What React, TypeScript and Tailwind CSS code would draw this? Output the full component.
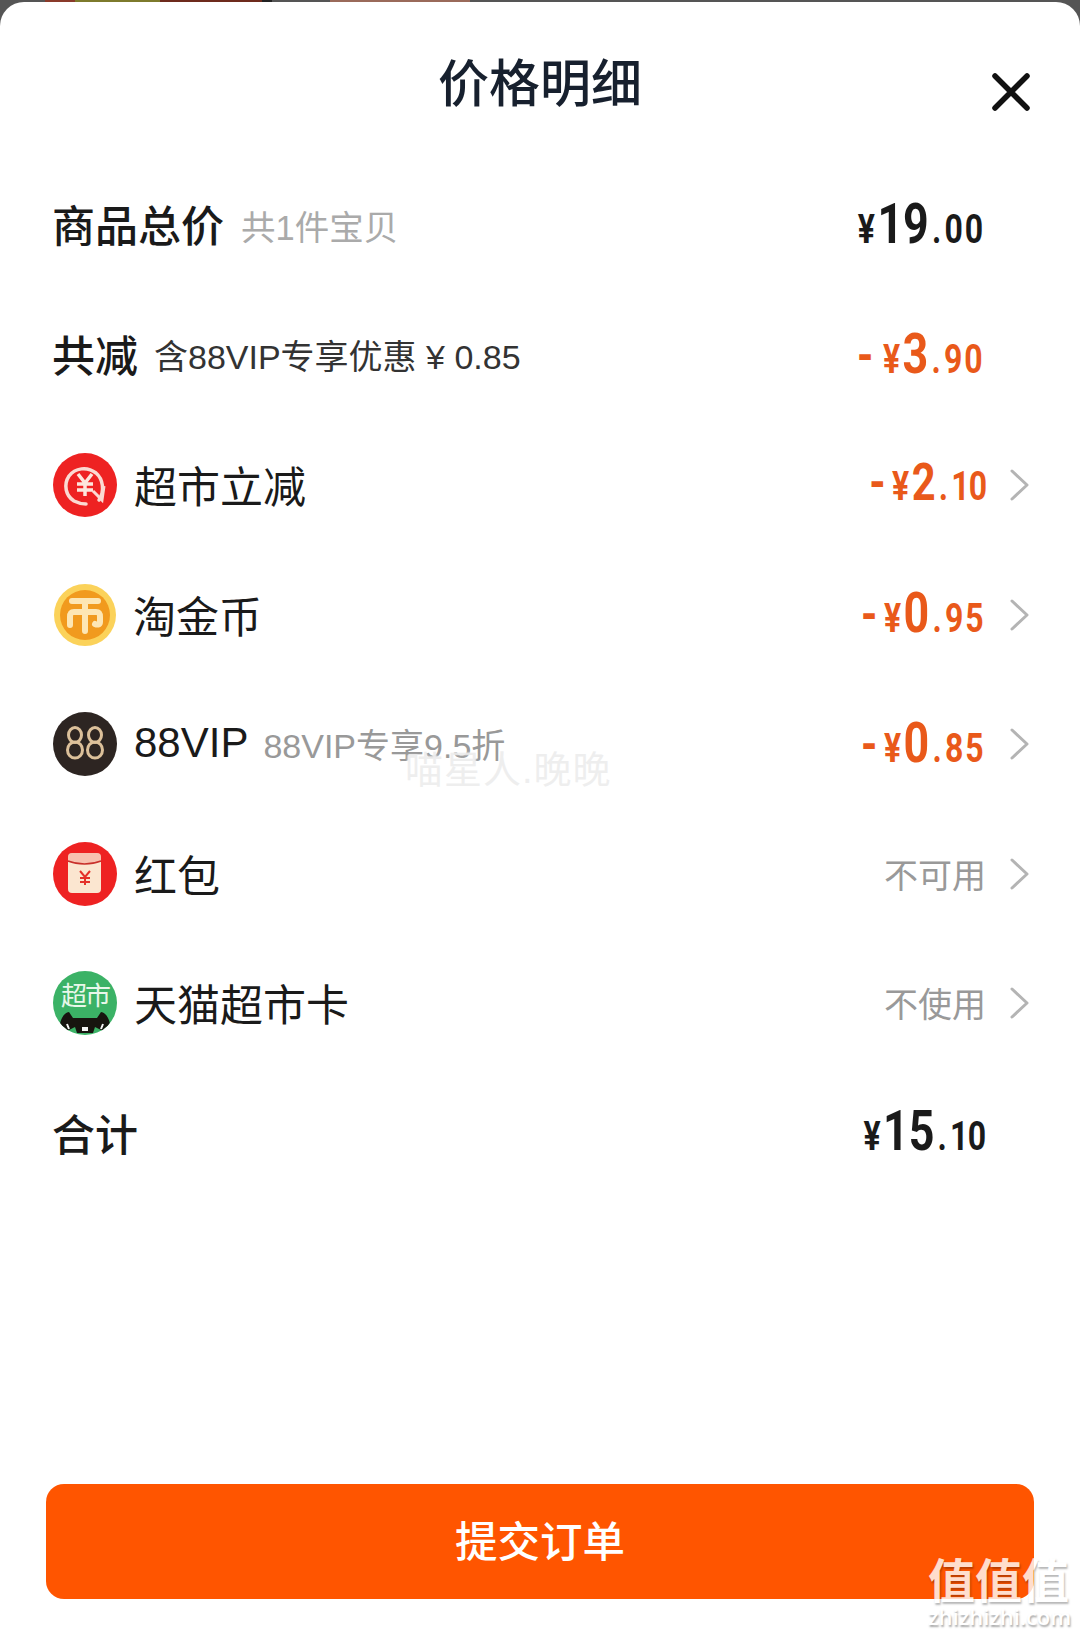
// 价格明细 bottom sheet
const SANS = "font-['Liberation_Sans','Noto_Sans_CJK_SC',sans-serif]";

function Amount({
  sign,
  big,
  small,
  orange,
  bigSize = "text-[56px]",
  gap = "mr-[8px]",
  smallTracking = "tracking-[2.5px]",
}: {
  sign: string;
  big: string;
  small: string;
  orange?: boolean;
  bigSize?: string;
  gap?: string;
  smallTracking?: string;
}) {
  return (
    <span
      className={`flex items-baseline pb-[3px] origin-right scale-x-[0.8] font-['Roboto',sans-serif] font-bold leading-none ${
        orange ? "text-[#e9591a]" : "text-[#1a1a1a]"
      }`}
    >
      {sign === "-¥" ? <span className={`text-[52px] ${gap}`}>-</span> : null}
      <span className="text-[40px] mr-[3px]">¥</span>
      <span className={bigSize}>{big}</span>
      <span className="text-[40px] mx-[4px]">.</span>
      <span className={`text-[40px] ${smallTracking}`}>{small}</span>
    </span>
  );
}

function Chevron() {
  return (
    <svg width="20" height="32" viewBox="0 0 20 32" fill="none" className="shrink-0">
      <path d="M2 2 L17 16 L2 30" stroke="#b4b4b4" strokeWidth="3" strokeLinecap="round" strokeLinejoin="round" />
    </svg>
  );
}

function SupermarketIcon() {
  return (
    <svg width="64" height="64" viewBox="0 0 64 64" className="shrink-0">
      <circle cx="32" cy="32" r="32" fill="#ee2222" />
      <path d="M46 47 C52 38 50 26 43 20 C34 13 22 15 16 23 C10 32 13 43 21 48 C25 50 29 51 33 51" fill="none" stroke="#fbdad2" strokeWidth="3.5" strokeLinecap="round" />
      <path d="M40 38 L49 47 L51 33" fill="none" stroke="#fbdad2" strokeWidth="3" />
      <path d="M25 21 L32 30 L39 21 M32 30 V43 M24 31 H40 M24 37 H40" fill="none" stroke="#fde6dc" strokeWidth="3.5" />
    </svg>
  );
}

function CoinIcon() {
  return (
    <svg width="62" height="62" viewBox="0 0 62 62" className="shrink-0 ml-[1px]">
      <circle cx="31" cy="31" r="31" fill="#fbd25a" />
      <circle cx="31" cy="31" r="25" fill="#f19a1e" />
      <path d="M18 17 H44 M31 17 V47 M20 28 H42 C46 28 46 30 46 33 V38 C46 41 43 41 41 40 M20 28 C17 28 16 30 16 33 V41" fill="none" stroke="#fde6b4" strokeWidth="6" strokeLinecap="round" />
    </svg>
  );
}

function VipIcon() {
  return (
    <svg width="64" height="64" viewBox="0 0 64 64" className="shrink-0">
      <circle cx="32" cy="32" r="32" fill="#2d2522" />
      <g fill="none" stroke="#dcc09a" strokeWidth="3">
        <ellipse cx="22" cy="23" rx="6.5" ry="7.5" />
        <ellipse cx="22" cy="38" rx="7.5" ry="8" />
        <ellipse cx="42" cy="23" rx="6.5" ry="7.5" />
        <ellipse cx="42" cy="38" rx="7.5" ry="8" />
      </g>
    </svg>
  );
}

function RedPacketIcon() {
  return (
    <svg width="64" height="64" viewBox="0 0 64 64" className="shrink-0">
      <circle cx="32" cy="32" r="32" fill="#ee2222" />
      <rect x="15" y="11" width="33" height="40" rx="4" fill="#fbe6d0" />
      <path d="M15 15 C15 12 17 11 19 11 H44 C46 11 48 12 48 15 V19 C38 23 25 23 15 19 Z" fill="#ee2222" opacity="0.18" />
      <path d="M15 19 C25 23 38 23 48 19" fill="none" stroke="#c8302a" strokeWidth="1.5" />
      <path d="M27 29 L32 35 L37 29 M32 35 V43 M27 36 H37 M27 40 H37" fill="none" stroke="#e4312a" strokeWidth="2" />
    </svg>
  );
}

function TmallIcon() {
  return (
    <div className="relative w-16 h-16 shrink-0 rounded-full overflow-hidden bg-[#3bb266]">
      <span className="absolute left-0 right-0 top-[8px] text-center text-[#e8f7ea] text-[26px] leading-[30px] tracking-[-2px] font-['Noto_Sans_CJK_SC',sans-serif]">
        超市
      </span>
      <svg width="64" height="64" viewBox="0 0 64 64" className="absolute inset-0">
        <path d="M7 53 C8 47 12 41 16 41 L20 47 H44 L48 41 C52 41 56 47 57 53 L50 60 L42 56 L40 62 H24 L22 56 L14 60 Z" fill="#17140f" />
        <rect x="29" y="56" width="6" height="4" fill="#f4f4f4" />
        <path d="M14 53 L16 58 M50 53 L48 58" stroke="#f4f4f4" strokeWidth="2" />
      </svg>
    </div>
  );
}

function DetailRow({
  icon,
  label,
  note,
  value,
}: {
  icon: React.ReactNode;
  label: string;
  note?: string;
  value: React.ReactNode;
}) {
  return (
    <div className="h-[129.6px] flex items-center">
      {icon}
      {note ? (
        <>
          <span className="ml-[17px] pb-[2px] text-[42px] leading-none text-[#1a1a1a]">{label}</span>
          <span className="ml-[15px] pt-[4px] text-[34px] leading-none text-[#999999]">{note}</span>
        </>
      ) : (
        <span className="ml-[17px] pt-[7px] text-[43px] leading-none text-[#1a1a1a]">{label}</span>
      )}
      <span className="ml-auto flex items-center">
        {value}
        <span className="ml-[24px]">
          <Chevron />
        </span>
      </span>
    </div>
  );
}

function PlainRow({ left, right }: { left: React.ReactNode; right: React.ReactNode }) {
  return (
    <div className="h-[129.6px] flex items-center justify-between pr-[45px]">
      <div className="flex items-center -ml-[1px] pt-[4px]">{left}</div>
      {right}
    </div>
  );
}

function Unavailable({ text }: { text: string }) {
  return <span className="pt-[4px] text-[34px] leading-none text-[#999999]">{text}</span>;
}

export default function App() {
  return (
    <div className={`relative w-[1080px] h-[1637px] overflow-hidden bg-[linear-gradient(90deg,#555_45px,#8a3a2a_45px,#8a3a2a_75px,#7d7a2c_75px,#7d7a2c_160px,#6d2a1c_160px,#6d2a1c_262px,#222_262px,#222_272px,#555_272px,#555_330px,#9a6a5a_330px,#9a6a5a_470px,#555_470px)] pt-[2px] ${SANS}`}>
      <div className="w-full h-[1635px] bg-white rounded-t-[24px] flex flex-col">
        <header className="relative h-[159px] pt-[48px] text-center shrink-0">
          <h1 className="text-[51px] leading-[70px] font-medium text-[#17202e]">价格明细</h1>
          <svg width="38" height="38" viewBox="0 0 38 38" className="absolute right-[50px] top-[71px]">
            <path d="M3 3 L35 35 M35 3 L3 35" stroke="#111111" strokeWidth="5.5" strokeLinecap="round" />
          </svg>
        </header>

        <div className="pl-[53px] pr-[50px]">
          <PlainRow
            left={
              <>
                <span className="text-[43px] leading-none font-medium text-[#1a1a1a]">商品总价</span>
                <span className="ml-[17px] text-[34.5px] leading-none text-[#aaaaaa]">共1件宝贝</span>
              </>
            }
            right={<Amount sign="¥" big="19" small="00" />}
          />
          <PlainRow
            left={
              <>
                <span className="text-[43px] leading-none font-medium text-[#1a1a1a]">共减</span>
                <span className="ml-[16px] text-[34px] leading-none text-[#333333]">含88VIP专享优惠 ¥ 0.85</span>
              </>
            }
            right={<Amount sign="-¥" big="3" small="90" orange gap="mr-[12px]" />}
          />
          <DetailRow
            icon={<SupermarketIcon />}
            label="超市立减"
            value={<Amount sign="-¥" big="2" small="10" orange bigSize="text-[52px]" smallTracking="tracking-[-1px]" />}
          />
          <DetailRow icon={<CoinIcon />} label="淘金币" value={<Amount sign="-¥" big="0" small="95" orange />} />
          <DetailRow icon={<VipIcon />} label="88VIP" note="88VIP专享9.5折" value={<Amount sign="-¥" big="0" small="85" orange />} />
          <DetailRow icon={<RedPacketIcon />} label="红包" value={<Unavailable text="不可用" />} />
          <DetailRow icon={<TmallIcon />} label="天猫超市卡" value={<Unavailable text="不使用" />} />
          <PlainRow
            left={<span className="pt-[4px] text-[43px] leading-none font-medium text-[#1a1a1a]">合计</span>}
            right={<Amount sign="¥" big="15" small="10" smallTracking="tracking-[-1px]" />}
          />
        </div>

        <div className="mt-auto px-[46px] pb-[38px]">
          <button className="w-full h-[115px] pt-[2px] rounded-[18px] bg-[#ff5500] text-white text-[42.5px] font-medium">
            提交订单
          </button>
        </div>
      </div>

      {/* 图片水印 */}
      <span className="absolute left-[405px] top-[751px] text-[38px] leading-none tracking-[1px] text-[#e4e4e4]/60 [text-shadow:0_0_2px_#ffffff]">喵星人.晚晚</span>
      <div className="absolute left-[928px] top-[1552px] w-[148px] text-white [text-shadow:1px_2px_2px_rgba(0,0,0,0.35)]">
        <div className="text-[47px] leading-[52px] font-bold opacity-80 whitespace-nowrap font-['Noto_Sans_CJK_SC',sans-serif]">值值值</div>
        <div className="font-['Open_Sans',sans-serif] text-[22px] leading-[24px] font-semibold whitespace-nowrap">zhizhizhi.com</div>
      </div>
    </div>
  );
}
